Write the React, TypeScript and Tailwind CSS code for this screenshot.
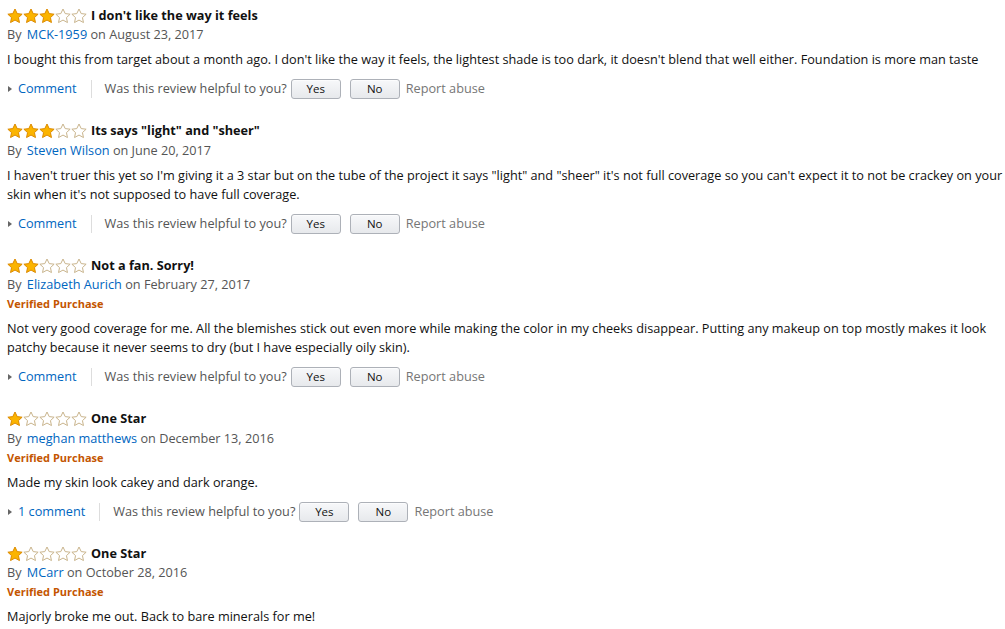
import React from "react";

type Review = {
  stars: number;
  title: string;
  author: string;
  date: string;
  verified?: boolean;
  body: string;
  comments?: string;
};

const reviews: Review[] = [
  {
    stars: 3,
    title: "I don't like the way it feels",
    author: "MCK-1959",
    date: "August 23, 2017",
    body: "I bought this from target about a month ago. I don't like the way it feels, the lightest shade is too dark, it doesn't blend that well either. Foundation is more man taste",
  },
  {
    stars: 3,
    title: 'Its says "light" and "sheer"',
    author: "Steven Wilson",
    date: "June 20, 2017",
    body: "I haven't truer this yet so I'm giving it a 3 star but on the tube of the project it says \"light\" and \"sheer\" it's not full coverage so you can't expect it to not be crackey on your skin when it's not supposed to have full coverage.",
  },
  {
    stars: 2,
    title: "Not a fan. Sorry!",
    author: "Elizabeth Aurich",
    date: "February 27, 2017",
    verified: true,
    body: "Not very good coverage for me. All the blemishes stick out even more while making the color in my cheeks disappear. Putting any makeup on top mostly makes it look patchy because it never seems to dry (but I have especially oily skin).",
  },
  {
    stars: 1,
    title: "One Star",
    author: "meghan matthews",
    date: "December 13, 2016",
    verified: true,
    body: "Made my skin look cakey and dark orange.",
    comments: "1 comment",
  },
  {
    stars: 1,
    title: "One Star",
    author: "MCarr",
    date: "October 28, 2016",
    verified: true,
    body: "Majorly broke me out. Back to bare minerals for me!",
  },
];

const Star = ({ filled }: { filled: boolean }) => (
  <svg width="16" height="16" viewBox="0 0 24 24">
    <path
      d="M12 1.5l3.3 6.9 7.4.9-5.5 5.1 1.5 7.4L12 18.1l-6.7 3.7 1.5-7.4-5.5-5.1 7.4-.9z"
      fill={filled ? "#fbb400" : "#fff"}
      stroke={filled ? "#dc8a00" : "#c9b48c"}
      strokeWidth="1.5"
      strokeLinejoin="round"
    />
  </svg>
);

const Stars = ({ n }: { n: number }) => (
  <div className="flex items-center">
    {[0, 1, 2, 3, 4].map((i) => (
      <Star key={i} filled={i < n} />
    ))}
  </div>
);

const VoteButton = ({ label }: { label: string }) => (
  <button className="h-[20px] w-[50px] rounded-[3px] border border-[#adb1b8] bg-gradient-to-b from-[#f7f8fa] to-[#e7e9ec] text-[11.5px] leading-none text-[#111] shadow-[inset_0_1px_0_rgba(255,255,255,0.6)]">
    {label}
  </button>
);

const ReviewItem = ({ r, last }: { r: Review; last: boolean }) => (
  <div className={last ? "" : "mb-[22.5px]"}>
    <div className="flex h-[19px] items-center">
      <Stars n={r.stars} />
      <span className="ml-[4px] text-[12.7px] font-bold text-[#111]">{r.title}</span>
    </div>
    <div className="h-[19px] leading-[19px] text-[#555]">
      By <a className="ml-[2px] text-[#0066c0]">{r.author}</a> on {r.date}
    </div>
    {r.verified && (
      <div className="h-[19px] text-[11px] font-bold leading-[19px] text-[#c45500]">Verified Purchase</div>
    )}
    <p className="mt-[6px] leading-[19px] text-[#111]">{r.body}</p>
    {!last && (
      <div className="mt-[10px] flex h-[20px] items-center">
        <span className="mr-[6px] ml-[1px] inline-block h-0 w-0 border-y-[3.5px] border-l-[4px] border-y-transparent border-l-[#666]" />
        <a className="text-[#0066c0]">{r.comments ?? "Comment"}</a>
        <span className="mr-[13px] ml-[14px] h-[18px] w-px bg-[#ddd]" />
        <span className="mr-[4px] text-[#555]">Was this review helpful to you?</span>
        <VoteButton label="Yes" />
        <span className="w-[9px]" />
        <VoteButton label="No" />
        <span className="ml-[6px] text-[#767676]">Report abuse</span>
      </div>
    )}
  </div>
);

export default function App() {
  return (
    <div
      className="min-h-screen bg-white pl-[7px] pt-[6px] pr-[2px] text-[12.7px]"
      style={{ fontFamily: '"Open Sans", Arial, sans-serif' }}
    >
      {reviews.map((r, i) => (
        <ReviewItem key={i} r={r} last={i === reviews.length - 1} />
      ))}
    </div>
  );
}
